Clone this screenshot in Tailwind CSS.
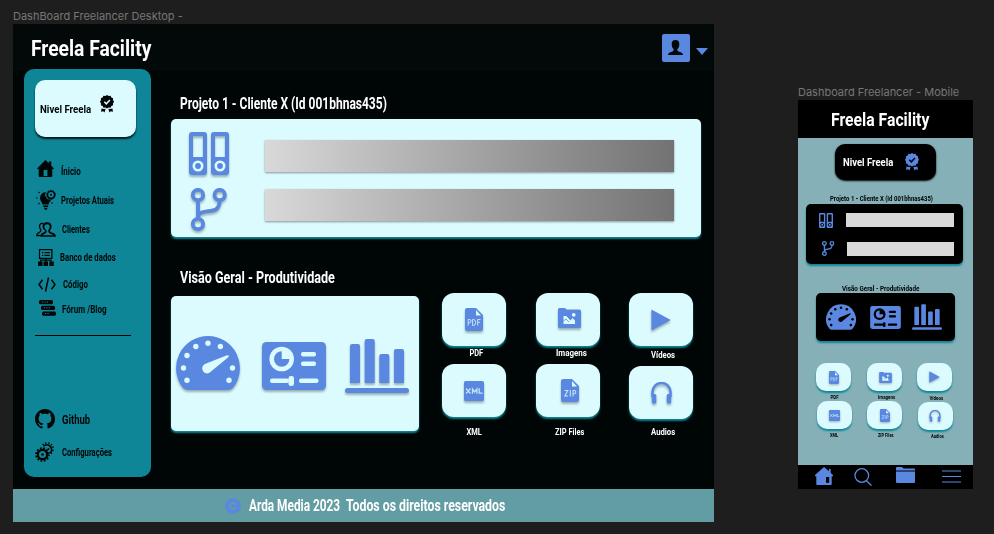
<!DOCTYPE html>
<html lang="pt-BR">
<head>
<meta charset="utf-8">
<title>Freela Facility</title>
<script src="https://cdn.jsdelivr.net/npm/@tailwindcss/browser@4"></script>
</head>
<body class="flex h-[534px] w-[994px] items-start overflow-hidden bg-[#1e1e1e] font-['Roboto','Noto_Sans',sans-serif] font-bold leading-none text-white">

<!-- Icon library; --h is the colour of the cut-outs -->
<svg class="hidden">
  <symbol id="badge" viewBox="0 0 14 18"><path d="M7 0l1.600 1 1.900-.3.9 1.700 1.700.8-.1 1.900L14 6.800l-1 1.600.1 1.900-1.700.8-.9 1.700-1.900-.3L7 13.400l-1.600-.9-1.900.3-.9-1.700-1.700-.8.1-1.900L0 6.800l1-1.700-.1-1.900 1.700-.8.9-1.700 1.900.3zM1.600 13.400l2.400.6 1.600-.2-1 3.600-1.400-1.200-2.200.6zM12.400 13.400l-2.400.6-1.600-.2 1 3.600 1.400-1.200 2.200.6z"/><path d="M4.300 6.800l2 2 3.600-3.800" fill="none" class="stroke-[var(--h)]" stroke-width="1.500"/></symbol>
  <symbol id="home" viewBox="0 0 18 18"><path d="M9 0l3.500 3.400V1.500h2.600V6L18 8.900l-1 1-.8-.6V17q0 1-1 1H2.800q-1 0-1-1V9.300l-.8.6-1-1z"/><path d="M7 10.500h4V17H7z" class="fill-[var(--h)]"/></symbol>
  <symbol id="homeside" viewBox="0 0 18 18"><path d="M9 0l5 4.300V2h1.700v4L18 8v1.200h-1.300V17q0 1-1 1H2.300q-1 0-1-1V9.200H0V8z"/><path d="M11 10h3.200v5.800H11z" class="fill-[var(--h)]"/></symbol>
  <symbol id="idea" viewBox="0 0 20 20"><path d="M10 2a6 6 0 0 0-6 6c0 3 2 3.800 2.600 6.500h6C13 12 14.500 11.500 15.300 9.600A5 5 0 0 1 10 2zM7.200 15.600h5v1.300h-5zM8 17.700h3.500l-.8 2H8.800z"/><circle cx="15" cy="4.800" r="3.600" fill="none" stroke="currentColor" stroke-width="1.600"/><circle cx="15" cy="4.800" r="4.500" fill="none" stroke="currentColor" stroke-width="1" stroke-dasharray="1.300 1.500"/><circle cx="15" cy="4.800" r="1"/><path d="M0 8h1.500M2.500 2l1 1M2.500 14l1-1M16.500 13.500l-1-1" stroke="currentColor" stroke-width="1.200"/></symbol>
  <symbol id="clients" viewBox="0 0 20 15"><path fill="none" stroke="currentColor" stroke-width="1.300" d="M7 1.500C3.800 1 3.200 3.500 3.700 5.500c.2 1.200.9 1.700 1.200 2.700.2 1.600-.9 2-2 2.500C1.500 11.200.8 12 .7 13.500h5"/><path d="M11 .3c3.200 0 4.700 1.700 4.500 4.400 0 1.800-.8 2.900-1.500 3.800-.1 1.200.5 1.600 1.800 2.100 2.400.8 4 1.400 4.200 4.100H4.500c.1-2.700 1.300-3.300 3-4.100 1.200-.5 1.600-1 1.400-2.100-1.200-.9-2.400-2-2.400-4C6.500 1.700 8 .3 11 .3z"/><path d="M11 2.200c2 0 2.800.9 2.700 2.700-.1 1.600-.8 2.300-1.500 3.200-.2 2 .5 2.900 2.100 3.600 1.200.5 2.400.7 3.100 1.600H6.800c.3-.7.800-.9 1.700-1.300 1.700-.8 2.400-1.700 2.100-3.500C9.700 7.700 8.500 6.500 8.400 4.700 8.400 3.200 9.300 2.200 11 2.200z" class="fill-[var(--h)]"/></symbol>
  <symbol id="database" viewBox="0 0 16 17"><path d="M1.600.7h12.200v8.600H1.600z" fill="none" stroke="currentColor" stroke-width="1.400"/><path d="M2.300 1.400h10.800v7.200H2.300z" class="fill-[var(--h)]"/><path d="M4 3.600h1.300M6.500 3.600h5.300M4 6.400h1.300M6.500 6.400h5.300M7.800 9v4M2.600 13v-1.800H13V13" fill="none" stroke="currentColor" stroke-width="1.200"/><path d="M0 12.500h4.500V17H0zM5.500 12.500H10V17H5.500zM11.300 12.500h4.500V17h-4.500z"/></symbol>
  <symbol id="code" viewBox="0 0 18 15"><path d="M4.500 2.800L1 7.500l3.500 4.700M13.500 2.800L17 7.500l-3.500 4.700M10.500.5l-3 14" fill="none" stroke="currentColor" stroke-width="1.500"/></symbol>
  <symbol id="forum" viewBox="0 0 17 16"><rect x="0" y="0" width="14" height="4.300" rx="1.500"/><rect x="2" y="5.700" width="14" height="4.300" rx="1.500"/><rect x="3" y="11.400" width="14" height="4.300" rx="1.500"/><path d="M3 2.100h7M5 7.800h7M6 13.500h5" class="stroke-[var(--h)]" stroke-width="1" stroke-dasharray="1.200 1.200"/></symbol>
  <symbol id="github" viewBox="0 0 16 16"><path d="M8 0C3.580 0 0 3.580 0 8c0 3.540 2.290 6.530 5.470 7.590.4.070.55-.17.55-.38 0-.19-.01-.82-.01-1.490-2.010.37-2.530-.49-2.690-.94-.09-.23-.48-.94-.82-1.130-.28-.15-.68-.52-.01-.53.63-.01 1.080.58 1.230.82.72 1.210 1.870.87 2.330.66.07-.52.28-.87.51-1.070-1.780-.2-3.640-.89-3.640-3.950 0-.87.31-1.590.82-2.150-.08-.2-.36-1.020.08-2.120 0 0 .67-.21 2.200.82.64-.18 1.320-.27 2-.27s1.360.09 2 .27c1.530-1.040 2.200-.82 2.200-.82.44 1.100.16 1.920.08 2.120.51.56.82 1.270.82 2.150 0 3.070-1.870 3.750-3.650 3.950.29.25.54.73.54 1.480 0 1.070-.01 1.930-.01 2.200 0 .21.15.46.55.38A8.010 8.010 0 0 0 16 8c0-4.420-3.580-8-8-8z"/></symbol>
  <symbol id="gears" viewBox="0 0 20 20"><g fill="none" stroke="currentColor"><circle cx="7.500" cy="12.500" r="4.700" stroke-width="2.300"/><circle cx="7.500" cy="12.500" r="6.500" stroke-width="1.700" stroke-dasharray="1.800 1.600"/><path d="M8.500 4.200a4.600 4.600 0 1 1 6.500 7" stroke-width="1.700"/><path d="M7.600 3a6 6 0 1 1 8 8.800" stroke-width="1.500" stroke-dasharray="1.400 1.600"/></g><circle cx="7.500" cy="12.500" r="1.300"/><circle cx="13.500" cy="7" r=".9"/></symbol>
  <symbol id="binders" viewBox="0 0 40 43"><path fill-rule="evenodd" d="M3 0h12q3 0 3 3v37q0 3-3 3H3q-3 0-3-3V3q0-3 3-3zm1 4v21h10V4zM25 0h12q3 0 3 3v37q0 3-3 3H25q-3 0-3-3V3q0-3 3-3zm1 4v21h10V4z"/><g fill="none" class="stroke-[var(--h)]" stroke-width="2.600"><circle cx="9" cy="34" r="4.200"/><circle cx="31" cy="34" r="4.200"/></g></symbol>
  <symbol id="branch" viewBox="0 0 36 43"><g fill="none" stroke="currentColor" stroke-width="3.800"><circle cx="7" cy="7" r="5.200"/><circle cx="28.700" cy="7" r="5.200"/><circle cx="7" cy="36" r="5.200"/><path d="M7 12v19M28.700 12c0 14-11 9.500-18 12.500-2.400 1-3.700 2.500-3.700 5"/></g></symbol>
  <symbol id="gauge" viewBox="0 0 64 54"><path d="M32 0a32 32 0 0 1 25.500 51.200q-2 2.800-5 2.800h-41q-3 0-5-2.800A32 32 0 0 1 32 0z"/><g class="fill-[var(--h)]"><circle cx="32" cy="7.300" r="2.700"/><circle cx="19.800" cy="10.500" r="2.700"/><circle cx="44.400" cy="10.500" r="2.700"/><circle cx="11" cy="19.500" r="2.700"/><circle cx="7.500" cy="32" r="2.700"/><circle cx="11" cy="44.300" r="2.700"/><circle cx="53" cy="44.300" r="2.700"/><circle cx="56.500" cy="32" r="2.700"/><path d="M29.500 27.800L51 19.200q3-.3 1 2.300L35.300 35.300a5 5 0 1 1-5.800-7.500z"/></g></symbol>
  <symbol id="panel" viewBox="0 0 64 48"><rect width="64" height="48" rx="4.500"/><g class="fill-[var(--h)]"><circle cx="19.700" cy="17" r="12.300"/><rect x="39" y="10" width="15" height="4.600" rx="2"/><rect x="39" y="19.500" width="15" height="4.600" rx="2"/><rect x="8" y="36.500" width="19" height="4.600" rx="2"/><rect x="26.500" y="34" width="5.500" height="10" rx="2.300"/><rect x="37" y="36.500" width="19.500" height="4.600" rx="2"/></g><path d="M19.700 9.300v7.700h7.700a7.700 7.700 0 1 1-7.700-7.700z"/></symbol>
  <symbol id="chart" viewBox="0 0 64 54"><path d="M5 44V7q0-2 2-2h6q2 0 2 2v37zM19.700 44V2q0-2 2-2h6q2 0 2 2v42zM34.300 44V17q0-2 2-2h6q2 0 2 2v27zM49 44V12q0-2 2-2h6q2 0 2 2v32z"/><rect y="49" width="64" height="5" rx="2.500"/></symbol>
  <symbol id="pdf" viewBox="0 0 18 23"><path d="M2 0h9l7 7v14q0 2-2 2H2q-2 0-2-2V2Q0 0 2 0z"/><path d="M11 2v5.500h5z" class="fill-[var(--h)]"/><path d="M3.200 17.500v-6h1.600q1.200 0 1.200 1.600t-1.200 1.600H3.200M7.600 17.500v-6h1q2 0 2 3t-2 3zM12.700 17.500v-6h2.800M12.700 14.300h2.500" fill="none" class="stroke-[var(--h)]" stroke-opacity=".8"/></symbol>
  <symbol id="zip" viewBox="0 0 18 23"><path d="M2 0h9l7 7v14q0 2-2 2H2q-2 0-2-2V2Q0 0 2 0z"/><path d="M11 2v5.500h5z" class="fill-[var(--h)]"/><path d="M3.600 11.500h3.200l-3 5.500h3.300M9.300 11v6.500M12 17.500v-6h1.600q1.200 0 1.200 1.600t-1.200 1.600H12" fill="none" class="stroke-[var(--h)]" stroke-opacity=".8" stroke-width="1.100"/></symbol>
  <symbol id="xml" viewBox="0 0 20 20"><rect width="20" height="20" rx="1.500"/><path d="M2 7.500l4.500 5M6.500 7.500l-4.500 5M8.500 12.700V8l2.200 3 2.200-3v4.700M15.200 7.300v4.800h3.500" fill="none" class="stroke-[var(--h)]" stroke-opacity=".8" stroke-width="1.300"/></symbol>
  <symbol id="image" viewBox="0 0 23 20"><path d="M1.500 0H7l1.500 1.500H21.500q1.500 0 1.500 1.500v15.500q0 1.500-1.500 1.500h-20Q0 20 0 18.500v-17Q0 0 1.500 0z"/><g class="fill-[var(--h)]"><circle cx="15.700" cy="6.800" r="1.900"/><path d="M5.500 8h2.800l4.200 4.500 2-2.500 2.500 2.500v3.500H5.500z"/></g><path d="M5.500 13l2.500-2 3 3" fill="none" stroke="currentColor" stroke-width=".8"/></symbol>
  <symbol id="play" viewBox="0 0 20 22"><path d="M.4.400L19.800 11 .4 21.600z"/></symbol>
  <symbol id="audio" viewBox="0 0 21 22"><path d="M1.500 15V10a9 9 0 0 1 18 0v5" fill="none" stroke="currentColor" stroke-width="2.600"/><rect x=".8" y="12" width="4.500" height="9.500" rx="1.500"/><rect x="15.700" y="12" width="4.500" height="9.500" rx="1.500"/></symbol>
</svg>

<!-- Desktop frame -->
<section class="ml-[13px] w-[700.500px] shrink-0">
  <div class="flex h-6 items-end pb-[2px]"><span class="w-max origin-left whitespace-nowrap font-['Inter'] text-[11px] font-normal leading-3 text-[#777]" data-w="170">DashBoard Freelancer Desktop -</span></div>
  <div class="h-[498px] bg-[#000505]">
    <header class="flex h-[47px] items-start justify-between bg-[#030909] pl-[18px] pr-[6px]">
      <h1 class="mt-[13px] w-max origin-left whitespace-nowrap text-[22px] leading-6" data-w="120">Freela Facility</h1>
      <div class="flex text-[#5a87df]">
        <div class="mt-[10px] flex h-7 w-7 justify-center rounded-[2px] bg-[#5a87df]"><svg class="mt-[6px] h-[15px] w-[15px] text-[#030909]" viewBox="0 0 15 15" fill="currentColor"><path d="M7.500 0c2.700 0 3.800 1.500 3.800 4.200 0 2.200-.7 4-2 5 0 1.800.4 2 2.700 2.700q3 .8 3 3.100H0q0-2.300 3-3.100c2.300-.7 2.700-.9 2.700-2.700-1.300-1-2-2.800-2-5C3.700 1.500 4.800 0 7.500 0z"/></svg></div>
        <svg class="ml-[6px] mt-6 h-[7px] w-[12px]" viewBox="0 0 12 7" fill="currentColor"><path d="M0 0h12L6 7z"/></svg>
      </div>
    </header>

    <div class="flex h-[418px]">
      <aside class="-mt-[2px] ml-[11px] h-[408px] w-[127px] shrink-0 rounded-[10px] bg-[#0f8697] pl-[11px] pt-[11px] text-[#000505] [--h:#0f8697]">
        <div class="flex h-[57px] w-[101px] rounded-[10px] bg-[#dbfbff] pl-[5px] shadow-[0_2px_2px_#00181c] [--h:#dbfbff]">
          <div class="w-[60px]"><span class="mt-6 block w-max origin-left whitespace-nowrap text-[11px] leading-3" data-w="51">Nivel Freela</span></div>
          <svg class="mt-[15px] h-[18px] w-[14px]" fill="currentColor"><use href="#badge"/></svg>
        </div>
        <nav class="mt-[19px] text-[10px] [&>a]:flex [&>a]:items-center [&_i]:flex [&_i]:w-[22px] [&_i]:shrink-0 [&_i]:justify-center [&_span]:w-max [&_span]:origin-left [&_span]:whitespace-nowrap [&_span]:pt-px [&_svg]:fill-current">
          <a class="h-[30px]"><i class="pb-[6px]"><svg class="mr-[2px] h-[17px] w-[17px]"><use href="#home"/></svg></i><span class="ml-1" data-w="20">Ínicio</span></a>
          <a class="h-7"><i><svg class="h-5 w-5"><use href="#idea"/></svg></i><span class="ml-[4px]" data-w="53">Projetos Atuais</span></a>
          <a class="h-[30px]"><i><svg class="mr-px h-[15px] w-[20px]"><use href="#clients"/></svg></i><span class="ml-[5px]" data-w="28">Clientes</span></a>
          <a class="h-[27px]"><i><svg class="h-[17px] w-4"><use href="#database"/></svg></i><span class="ml-[3px]" data-w="56">Banco de dados</span></a>
          <a class="h-[26px]"><i><svg class="ml-[2px] h-[15px] w-[18px]"><use href="#code"/></svg></i><span class="ml-[6px]" data-w="25">Código</span></a>
          <a class="h-[25px]"><i class="pb-[3px]"><svg class="ml-[3px] h-4 w-[17px]"><use href="#forum"/></svg></i><span class="ml-[5px]" data-w="45">Fórum /Blog</span></a>
          <hr class="mb-[69px] mt-[13px] w-24 border-black">
          <a class="h-7 text-[12px]"><i><svg class="-ml-[2px] h-5 w-5"><use href="#github"/></svg></i><span class="ml-[5px]" data-w="28.500">Github</span></a>
          <a class="mt-[5px] h-7 text-[11px]"><i><svg class="-ml-[2px] h-5 w-5"><use href="#gears"/></svg></i><span class="ml-[5px]" data-w="50">Configurações</span></a>
        </nav>
      </aside>

      <main class="ml-5 w-[531px] [--h:#dbfbff]">
        <h2 class="ml-[9px] mt-[25px] w-max origin-left whitespace-nowrap text-[16px] leading-4" data-w="207">Projeto 1 - Cliente X (Id 001bhnas435)</h2>
        <div class="mt-[7px] flex h-[118px] w-[530px] rounded-[5px] bg-[#dbfbff] shadow-[0_2px_2px_#0f8697]">
          <div class="ml-[18px] mt-[13px] flex w-[76px] flex-col gap-[13px] fill-[#5a87df] text-[#5a87df]">
            <svg class="h-[43px] w-10 drop-shadow-[0_2px_1px_rgba(0,0,0,0.3)]"><use href="#binders"/></svg>
            <svg class="ml-[2px] h-[43px] w-9 drop-shadow-[0_2px_1px_rgba(0,0,0,0.3)]"><use href="#branch"/></svg>
          </div>
          <div class="mt-[21px] flex w-[409px] flex-col gap-[17px]">
            <div class="h-8 bg-linear-to-r from-[#d9d9d9] to-[#737373] shadow-[0_1px_2px_rgba(0,0,0,0.4)]"></div>
            <div class="h-8 bg-linear-to-r from-[#d9d9d9] to-[#737373] shadow-[0_1px_2px_rgba(0,0,0,0.4)]"></div>
          </div>
        </div>
        <h2 class="ml-[9px] mt-[33px] w-max origin-left whitespace-nowrap text-[16px] leading-4" data-w="155">Visão Geral - Produtividade</h2>
        <div class="mt-[6px] flex">
          <div class="mt-[4px] flex h-[135px] w-[248px] shrink-0 rounded-[5px] bg-[#dbfbff] fill-[#5a87df] pl-[5px] shadow-[0_2px_2px_#0f8697] [&>svg]:drop-shadow-[0_2px_1px_rgba(0,0,0,0.3)]">
            <svg class="mt-[40px] h-[54px] w-16"><use href="#gauge"/></svg>
            <svg class="ml-[22px] mt-[46px] h-12 w-16"><use href="#panel"/></svg>
            <svg class="ml-[19px] mt-[43px] h-[54px] w-16"><use href="#chart"/></svg>
          </div>
          <div class="ml-[23px] grid auto-rows-[71px] grid-cols-[64px_64px_64px] gap-x-[29.500px] text-[9px] [&_svg]:fill-[#5a87df] [&_svg]:text-[#5a87df] [&_svg]:drop-shadow-[0_2px_1px_rgba(0,0,0,0.3)] [&>div>div]:flex [&>div>div]:h-[53px] [&>div>div]:w-[64px] [&>div>div]:shrink-0 [&>div>div]:items-center [&>div>div]:justify-center [&>div>div]:rounded-[12px] [&>div>div]:bg-[#dbfbff] [&>div>div]:shadow-[0_2px_2px_#0f8697] [&>div]:flex [&>div]:flex-col [&>div]:items-center [&_span]:whitespace-nowrap">
            <div class="pt-px"><div><svg class="h-[23px] w-[18px]"><use href="#pdf"/></svg></div><span class="mt-[3px] -mr-[5px]" data-w="14">PDF</span></div>
            <div class="pt-px"><div><svg class="mb-[3px] ml-[4px] h-5 w-[23px]"><use href="#image"/></svg></div><span class="mt-[3px] -mr-[8px]" data-w="31">Imagens</span></div>
            <div class="pt-px"><div><svg class="h-[22px] w-5"><use href="#play"/></svg></div><span class="mt-[5px] -mr-[4px]" data-w="24">Vídeos</span></div>
            <div class="pt-px"><div><svg class="h-5 w-5"><use href="#xml"/></svg></div><span class="mt-[11px]" data-w="15">XML</span></div>
            <div class="pt-px"><div><svg class="ml-[5px] h-[23px] w-[18px]"><use href="#zip"/></svg></div><span class="mt-[11px] -mr-[4px]" data-w="29">ZIP Files</span></div>
            <div class="pt-[3px]"><div><svg class="h-[22px] w-[21px]"><use href="#audio"/></svg></div><span class="mt-[9px] -mr-[4px]" data-w="24">Audios</span></div>
          </div>
        </div>
      </main>
    </div>

    <footer class="flex h-[33px] items-center bg-[#629da3] pl-[212px] text-[16px]">
      <svg class="h-4 w-4" viewBox="0 0 16 16"><circle cx="8" cy="8" r="7.800" fill="#5a87df"/><path d="M10.800 9.200a3 3 0 1 1 0-2.400" fill="none" stroke="#629da3" stroke-width="1.900"/></svg>
      <div class="ml-2 w-[97px]"><span class="block w-max origin-left whitespace-nowrap" data-w="91">Arda Media 2023</span></div>
      <span class="w-max origin-left whitespace-nowrap" data-w="159">Todos os direitos reservados</span>
    </footer>
  </div>
</section>

<!-- Mobile frame -->
<section class="ml-[84.500px] mt-[86px] w-[175px] shrink-0">
  <div class="h-[14px] pt-px"><span class="block w-max origin-left whitespace-nowrap font-['Inter'] text-[11px] font-normal leading-[11px] text-[#777]" data-w="161">Dashboard Freelancer - Mobile</span></div>
  <div class="flex h-[389px] flex-col bg-[#86b0b7]">
    <header class="h-[38px] bg-black pl-[33px] pt-[10px]"><h1 class="w-max origin-left whitespace-nowrap text-[18px] leading-5" data-w="98">Freela Facility</h1></header>
    <div class="ml-[37px] mt-[6px] flex h-9 w-[101px] rounded-[10px] bg-black pl-2 shadow-[0_1px_2px_#000] [--h:#000]">
      <div class="w-[62px]"><span class="mt-[13px] block w-max origin-left whitespace-nowrap text-[11px] leading-3" data-w="50">Nivel Freela</span></div>
      <svg class="mt-[9px] h-[18px] w-[14px] fill-[#5a87df]"><use href="#badge"/></svg>
    </div>
    <h2 class="ml-8 mt-[15px] w-max origin-left whitespace-nowrap text-[8px] leading-2 text-black" data-w="103">Projeto 1 - Cliente X (Id 001bhnas435)</h2>
    <div class="ml-2 mt-px flex h-[60px] w-[157px] rounded-[5px] bg-black shadow-[0_2px_2px_#0f8697] [--h:#000]">
      <div class="ml-[13px] mt-[9px] flex w-[27px] flex-col gap-[13px] fill-[#5a87df] text-[#5a87df]">
        <svg class="h-[15px] w-[14px]"><use href="#binders"/></svg>
        <svg class="ml-[3px] h-[15px] w-[12.500px]"><use href="#branch"/></svg>
      </div>
      <div class="mt-[9px] flex w-[108px] flex-col gap-[15px]">
        <div class="h-[14px] bg-[#d9d9d9]"></div>
        <div class="ml-[.5px] h-[14px] bg-[#d9d9d9]"></div>
      </div>
    </div>
    <h2 class="ml-11 mt-[21px] w-max origin-left whitespace-nowrap text-[8px] leading-2 text-black" data-w="77">Visão Geral - Produtividade</h2>
    <div class="ml-[18px] flex h-12 w-[139px] rounded-[5px] bg-black fill-[#5a87df] pl-[10px] shadow-[0_2px_2px_#0f8697] [--h:#000]">
      <svg class="mt-[11px] h-[26px] w-[30px]"><use href="#gauge"/></svg>
      <svg class="ml-[14px] mt-[13px] h-[23px] w-[31px]"><use href="#panel"/></svg>
      <svg class="ml-[11px] mt-[11px] h-[26px] w-[30px]"><use href="#chart"/></svg>
    </div>
    <div class="ml-[18px] mt-[22px] grid grid-cols-[35px_35px_35px] gap-x-[15.500px] text-[6px] text-black [--h:#dbfbff] [&_svg]:fill-[#5a87df] [&_svg]:text-[#5a87df] [&_svg]:drop-shadow-[0_1px_1px_rgba(0,0,0,0.3)] [&>div>div]:flex [&>div>div]:h-7 [&>div>div]:w-[35px] [&>div>div]:shrink-0 [&>div>div]:items-center [&>div>div]:justify-center [&>div>div]:rounded-[10px] [&>div>div]:bg-[#dbfbff] [&>div>div]:shadow-[0_2px_2px_#0f8697] [&>div]:flex [&>div]:flex-col [&>div]:items-center [&_span]:whitespace-nowrap">
      <div class="h-[37.500px]"><div><svg class="h-[13px] w-[10px]"><use href="#pdf"/></svg></div><span class="mt-[3px] -mr-[3px]" data-w="8">PDF</span></div>
      <div><div><svg class="ml-[2px] h-[11px] w-[13px]"><use href="#image"/></svg></div><span class="mt-[3px] -mr-[5px]" data-w="17">Imagens</span></div>
      <div><div><svg class="h-3 w-[11px]"><use href="#play"/></svg></div><span class="mt-[4px] -mr-[3px]" data-w="14">Vídeos</span></div>
      <div class="ml-px"><div><svg class="h-[11px] w-[11px]"><use href="#xml"/></svg></div><span class="mt-[3px]" data-w="8">XML</span></div>
      <div class="ml-px"><div><svg class="ml-px h-[13px] w-[10px]"><use href="#zip"/></svg></div><span class="mt-[3px] -mr-[2px]" data-w="16">ZIP Files</span></div>
      <div class="ml-px pt-px"><div><svg class="h-3 w-3"><use href="#audio"/></svg></div><span class="mt-[3px] -mr-[4px]" data-w="13">Audios</span></div>
    </div>
    <nav class="mt-auto flex h-6 bg-black fill-[#5a87df] pl-[17px] text-[#5a87df] [--h:#000]">
      <svg class="mt-[2px] h-[18px] w-[18px]"><use href="#homeside"/></svg>
      <svg class="ml-[21px] mt-[3px] h-[18px] w-[18px]" viewBox="0 0 18 18" fill="none" stroke="currentColor" stroke-width="1.300"><circle cx="7.800" cy="7.500" r="6.800"/><path d="M12.500 12.700l5 5"/></svg>
      <svg class="ml-[24px] mt-[2px] h-4 w-[19px]" viewBox="0 0 19 16"><path d="M0 1q0-1 1-1h5l1.500 1.500H18q1 0 1 1V3.500H0zM0 4.600h19V15q0 1-1 1H1q-1 0-1-1z"/></svg>
      <svg class="ml-[27px] mt-[5px] h-[13px] w-[19px]" viewBox="0 0 19 13"><path d="M0 1h19M0 6.500h19M0 12h19" stroke="currentColor" stroke-width="1.200"/></svg>
    </nav>
  </div>
</section>

<script>
  // Condense each label horizontally to its designed width, again whenever its natural width changes.
  const fit = el => { if (el.offsetWidth) el.style.transform = `scaleX(${el.dataset.w / el.offsetWidth})`; };
  const observer = new ResizeObserver(entries => entries.forEach(e => fit(e.target)));
  document.querySelectorAll('[data-w]').forEach(el => { fit(el); observer.observe(el); });
  addEventListener('load', () => document.querySelectorAll('[data-w]').forEach(fit));
</script>
</body>
</html>
